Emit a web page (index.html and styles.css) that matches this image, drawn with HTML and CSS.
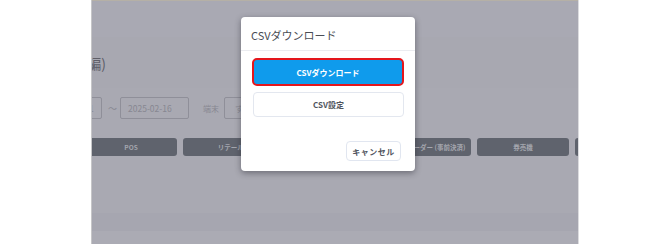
FILE: index.html
```html
<!DOCTYPE html>
<html lang="ja">
<head>
    <meta charset="UTF-8">
    <meta name="viewport" content="width=device-width, initial-scale=1.0">
    <title>CSVダウンロード</title>
    <link rel="stylesheet" href="styles.css">
</head>
<body>
    <div class="screen">
        <div class="topbar"></div>

        <div class="page-head">
            <div class="title-clip">
                <h2 class="title">売上レポート(店舗編)</h2>
            </div>
        </div>

        <div class="filters">
            <div class="input first">2025-02-01</div>
            <span class="tilde">〜</span>
            <div class="input date">2025-02-16</div>
            <span class="label">端末</span>
            <div class="input select">すべて</div>
        </div>

        <div class="tabs">
            <div class="tab first">POS</div>
            <div class="tab wide">リテールセルフレジ端末</div>
            <div class="tab wide">テイクアウト・モバイルオーダー (事前決済)</div>
            <div class="tab">券売機</div>
            <div class="tab">その他</div>
        </div>

        <div class="band-mid"></div>
        <div class="band-low"></div>
        <div class="band-foot"></div>

        <!-- modal sits over the dimmed page -->
        <div class="modal">
            <div class="modal-header">CSVダウンロード</div>
            <div class="modal-body">
                <button class="btn btn-primary">CSVダウンロード</button>
                <button class="btn btn-outline">CSV設定</button>
            </div>
            <div class="modal-footer">
                <button class="btn btn-cancel">キャンセル</button>
            </div>
        </div>
    </div>
</body>
</html>
```

FILE: styles.css
```css
body {
    margin: 0;
    background-color: #ffffff;
    font-family: "Noto Sans CJK JP", "Noto Sans", sans-serif;
}
.screen {
    position: relative;
    margin-left: 91px;
    width: 486px;
    height: 244px;
    overflow: hidden;
    background-color: #a9a9b2;
    border-left: 1px solid #c6c6c8;
    border-right: 1px solid #dcdcdf;
}
.topbar {
    height: 36px;
    border-top: 1px solid #b5b0a6;
    background-color: #a9a9b3;
}
.page-head {
    height: 51px;
    background-color: #a8a8b1;
}
.title-clip {
    display: flex;
    justify-content: flex-end;
    width: 14px;
    padding-top: 16px;
}
.title {
    margin: 0;
    flex-shrink: 0;
    white-space: nowrap;
    font-size: 14px;
    line-height: 20px;
    font-weight: 400;
    color: #5e5e68;
}
.filters {
    display: flex;
    align-items: center;
    padding-top: 9px;
    height: 22px;
}
.input {
    box-sizing: border-box;
    height: 22px;
    padding: 0 7px;
    border: 1px solid #8f8f99;
    border-radius: 2px;
    font-size: 8.5px;
    line-height: 20px;
    color: #878791;
    white-space: nowrap;
}
.input.first {
    margin-left: -50px;
    width: 60px;
}
.input.date {
    width: 69px;
}
.input.select {
    width: 120px;
    padding-left: 10px;
}
.tilde {
    margin: 0 3px 0 6px;
    font-size: 9px;
    color: #878791;
}
.label {
    margin: 0 5px 0 14px;
    font-size: 8px;
    color: #878791;
}
.tabs {
    display: flex;
    gap: 6px;
    margin-top: 19px;
}
.tab {
    flex-shrink: 0;
    width: 92px;
    height: 18px;
    border-radius: 3px;
    background-color: #5f636d;
    color: #a4a6ae;
    font-size: 6.5px;
    font-weight: 700;
    line-height: 18px;
    text-align: center;
    white-space: nowrap;
    overflow: hidden;
}
.tab.first {
    margin-left: -7px;
}
.tab.wide {
    width: 141px;
}
.band-mid {
    height: 57px;
}
.band-low {
    height: 18px;
    background-color: #a6a6b0;
}
.band-foot {
    height: 13px;
    background-color: #ababb4;
}
.modal {
    position: absolute;
    left: 149px;
    top: 17px;
    width: 174px;
    height: 154px;
    box-sizing: border-box;
    background-color: #ffffff;
    border-radius: 4px;
    box-shadow: 0 2px 6px rgba(30, 30, 40, 0.45);
    display: flex;
    flex-direction: column;
}
.modal-header {
    height: 33px;
    padding-left: 10px;
    border-bottom: 1px solid #ebecf0;
    font-size: 11px;
    line-height: 36px;
    color: #4a4d55;
}
.modal-body {
    display: flex;
    flex-direction: column;
    gap: 6px;
    padding: 7px 11px 0 11px;
}
.btn {
    box-sizing: border-box;
    font-family: inherit;
    font-size: 8px;
    font-weight: 700;
    cursor: pointer;
    background-color: #ffffff;
}
.btn-primary {
    height: 28px;
    width: 152px;
    border: 2px solid #e4161c;
    border-radius: 5px;
    background-color: #0f9bec;
    color: #ffffff;
}
.btn-outline {
    height: 25px;
    width: 151px;
    margin-left: 1px;
    border: 1px solid #e3e7ef;
    border-radius: 4px;
    color: #50545d;
}
.modal-footer {
    display: flex;
    justify-content: flex-end;
    padding: 24px 14px 0 0;
}
.btn-cancel {
    height: 20px;
    width: 55px;
    padding: 0;
    border: 1px solid #e1e6f0;
    border-radius: 4px;
    color: #50545d;
    letter-spacing: 0.5px;
}
```
